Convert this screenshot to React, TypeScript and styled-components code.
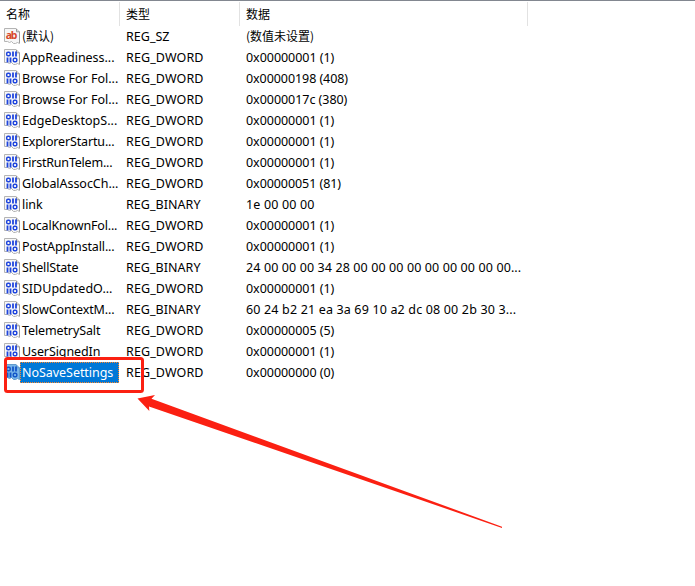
import React, { useLayoutEffect, useRef, useState } from "react";
import styled, { createGlobalStyle } from "styled-components";

const GlobalStyle = createGlobalStyle`
  * { box-sizing: border-box; }
  body { margin: 0; background: #fff; overflow: hidden; }
`;

const Panel = styled.main`
  position: relative;
  width: 695px;
  height: 586px;
  background: #fff;
  border-top: 1px solid #828790;
  color: #000;
  font: 12.5px/21px "Noto Sans", "Noto Sans CJK SC", sans-serif;
  overflow: hidden;
`;

const Header = styled.header`
  display: grid;
  grid-template-columns: 120px 120px 288px;
  height: 25px;
  padding-top: 1px;
`;

const HeaderCell = styled.div`
  height: 24px;
  padding-left: 6px;
  border-right: 1px solid #e2e2e2;
  font: 12px/23px "Noto Sans CJK SC", sans-serif;
`;

const Row = styled.div`
  display: grid;
  grid-template-columns: 120px 120px 1fr;
  height: 21px;
`;

const NameCell = styled.div`
  display: flex;
  align-items: center;
  padding-left: 4px;
`;

const Cell = styled.div`
  padding-left: 6px;
  white-space: nowrap;
`;

const Label = styled.span<{ $selected?: boolean }>`
  display: block;
  height: 21px;
  line-height: ${(p) => (p.$selected ? "19px" : "21px")};
  padding-left: ${(p) => (p.$selected ? "1px" : "2px")};
  width: ${(p) => (p.$selected ? "99px" : "auto")};
  color: ${(p) => (p.$selected ? "#fff" : "#000")};
  background: ${(p) => (p.$selected ? "#0078d7" : "transparent")};
  border: ${(p) => (p.$selected ? "1px dotted #ff8728" : "none")};
  white-space: nowrap;
`;

const Icon = styled.svg`
  display: block;
  flex: none;
  width: 16px;
  height: 17px;
`;

const Run = styled.span<{ $cjk?: boolean }>`
  display: inline-block;
  white-space: pre;
  ${(p) => p.$cjk && `font: 12px/20px "Noto Sans CJK SC", sans-serif; vertical-align: top;`}
`;

const Overlay = styled.svg`
  position: absolute;
  left: 0;
  top: -1px;
  width: 695px;
  height: 586px;
`;

/* Text tracked so that it fills a given advance width. */
function Fitted({ text, width, cjk }: { text: string; width: number; cjk?: boolean }) {
  const ref = useRef<HTMLSpanElement>(null);
  const [tracking, setTracking] = useState(0);
  useLayoutEffect(() => {
    if (ref.current) {
      const natural = ref.current.getBoundingClientRect().width - tracking * text.length;
      setTracking((width - natural) / text.length);
    }
  }, [text, width]);
  return (
    <Run ref={ref} $cjk={cjk} style={{ letterSpacing: tracking }}>
      {text}
    </Run>
  );
}

type Kind = "string" | "binary";

function ValueIcon({ kind, selected }: { kind: Kind; selected?: boolean }) {
  const ink = selected ? "#1456c8" : "#1f45dd";
  return (
    <Icon viewBox="0 0 16 17">
      <path
        d="M.5 .5h11.500l3.500 3.500v11.500l-2-1-2 1h-2l-2-2-2 1-2-1h-3z"
        fill={selected ? "#78b5e9" : "#f7f7f7"}
        stroke={selected ? "#629bcc" : "#b4b4b4"}
      />
      <path d="M12.500 .8v3h3v11" fill="none" stroke={selected ? "#629bcc" : "#999"} />
      {kind === "string" ? (
        <text x="1.800" y="10.700" fontFamily="Noto Sans" fontSize="10.500" fontWeight="700" fill="#d7472b" textLength="11.600">
          ab
        </text>
      ) : (
        <g fill="none" stroke={ink} strokeWidth="1.500">
          <rect x="2.700" y="3.200" width="3.500" height="3.500" rx="1.300" />
          <path d="M9 2.500v5M12 2.500v5M3.500 8.500v5M6.500 8.500v5" strokeWidth="1.800" />
          <rect x="9.300" y="9.200" width="3.500" height="3.500" rx="1.300" />
        </g>
      )}
    </Icon>
  );
}

type Entry = { name: string; w: number; type: string; data: string; dw: number; cjk?: boolean; selected?: boolean };

const typeWidths: Record<string, number> = { REG_SZ: 43.5, REG_DWORD: 77.5, REG_BINARY: 74.5 };

const entries: Entry[] = [
  { name: "(默认)", w: 32, type: "REG_SZ", data: "(数值未设置)", dw: 68, cjk: true },
  { name: "AppReadiness...", w: 92.5, type: "REG_DWORD", data: "0x00000001 (1)", dw: 88.3 },
  { name: "Browse For Fol...", w: 96.3, type: "REG_DWORD", data: "0x00000198 (408)", dw: 102 },
  { name: "Browse For Fol...", w: 96.3, type: "REG_DWORD", data: "0x0000017c (380)", dw: 101.3 },
  { name: "EdgeDesktopS...", w: 95.3, type: "REG_DWORD", data: "0x00000001 (1)", dw: 88.3 },
  { name: "ExplorerStartu...", w: 92.5, type: "REG_DWORD", data: "0x00000001 (1)", dw: 88.3 },
  { name: "FirstRunTelem...", w: 90.3, type: "REG_DWORD", data: "0x00000001 (1)", dw: 88.3 },
  { name: "GlobalAssocCh...", w: 96.3, type: "REG_DWORD", data: "0x00000051 (81)", dw: 95 },
  { name: "link", w: 20.5, type: "REG_BINARY", data: "1e 00 00 00", dw: 68.5 },
  { name: "LocalKnownFol...", w: 95.3, type: "REG_DWORD", data: "0x00000001 (1)", dw: 88.3 },
  { name: "PostAppInstall...", w: 92.5, type: "REG_DWORD", data: "0x00000001 (1)", dw: 88.3 },
  { name: "ShellState", w: 56.3, type: "REG_BINARY", data: "24 00 00 00 34 28 00 00 00 00 00 00 00 00 00...", dw: 275.3 },
  { name: "SIDUpdatedO...", w: 90.5, type: "REG_DWORD", data: "0x00000001 (1)", dw: 88.3 },
  { name: "SlowContextM...", w: 92.5, type: "REG_BINARY", data: "60 24 b2 21 ea 3a 69 10 a2 dc 08 00 2b 30 3...", dw: 270.3 },
  { name: "TelemetrySalt", w: 78.3, type: "REG_DWORD", data: "0x00000005 (5)", dw: 88.3 },
  { name: "UserSignedIn", w: 78.3, type: "REG_DWORD", data: "0x00000001 (1)", dw: 88.3 },
  { name: "NoSaveSettings", w: 91.3, type: "REG_DWORD", data: "0x00000000 (0)", dw: 88.3, selected: true },
];

export default function App() {
  return (
    <Panel>
      <GlobalStyle />
      <Header>
        <HeaderCell>名称</HeaderCell>
        <HeaderCell>类型</HeaderCell>
        <HeaderCell>数据</HeaderCell>
      </Header>
      {entries.map((e, i) => (
        <Row key={i}>
          <NameCell>
            <ValueIcon kind={e.cjk ? "string" : "binary"} selected={e.selected} />
            <Label $selected={e.selected}>
              <Fitted text={e.name} width={e.w} cjk={e.cjk} />
            </Label>
          </NameCell>
          <Cell>
            <Fitted text={e.type} width={typeWidths[e.type]} />
          </Cell>
          <Cell>
            <Fitted text={e.data} width={e.dw} cjk={e.cjk} />
          </Cell>
        </Row>
      ))}
      <Overlay viewBox="0 0 695 586">
        <rect x="5.5" y="358.5" width="137" height="33" rx="2" fill="none" stroke="#fb2012" strokeWidth="3" />
        <path d="M137.500 398.500L155 395l-3.500 3.800L502 526.700v1.200L149 406.500l.300 4.500z" fill="#fb2012" />
      </Overlay>
    </Panel>
  );
}
